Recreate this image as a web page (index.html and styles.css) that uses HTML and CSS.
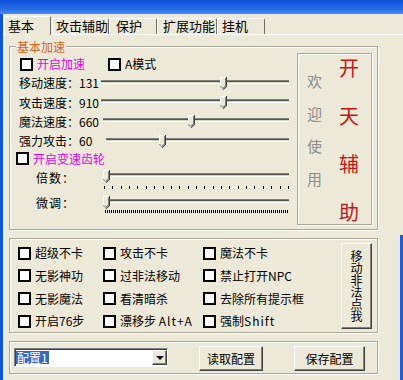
FILE: index.html
```html
<!DOCTYPE html>
<html>
  <head>
    <meta charset="UTF-8" />
    <title>开天辅助</title>
    <link rel="stylesheet" href="styles.css">
  </head>
  <body>
    <div class="titlebar"></div>
    <div class="window">
      <div class="tabs">
        <div class="tab active">基本</div>
        <div class="tab">攻击辅助</div>
        <div class="tab">保护</div>
        <div class="tab">扩展功能</div>
        <div class="tab">挂机</div>
      </div>
      <div class="panel">
        <fieldset class="group speed">
          <legend>基本加速</legend>
          <div class="speed-body">
            <div class="controls">
              <div class="row">
                <label class="check pink first"><span class="box"></span>开启加速</label>
                <label class="check"><span class="box"></span>A模式</label>
              </div>
              <div class="row">
                <span class="name">移动速度：131</span>
                <div class="slider">
                  <div class="track"></div>
                  <svg class="thumb" style="left:119px" width="7" height="13" viewBox="0 0 7 13"><path d="M0 0H7V9.5L3.5 13L0 9.5Z" fill="#404040"/><path d="M0 0H6V9L3 12L0 9Z" fill="#fff"/><path d="M1 1H6V9L3.5 11.5L1 9Z" fill="#808080"/><path d="M1 1H5V8.6L3 10.6L1 8.6Z" fill="#ece9d8"/></svg>
                </div>
              </div>
              <div class="row">
                <span class="name">攻击速度：910</span>
                <div class="slider">
                  <div class="track"></div>
                  <svg class="thumb" style="left:119px" width="7" height="13" viewBox="0 0 7 13"><path d="M0 0H7V9.5L3.5 13L0 9.5Z" fill="#404040"/><path d="M0 0H6V9L3 12L0 9Z" fill="#fff"/><path d="M1 1H6V9L3.5 11.5L1 9Z" fill="#808080"/><path d="M1 1H5V8.6L3 10.6L1 8.6Z" fill="#ece9d8"/></svg>
                </div>
              </div>
              <div class="row">
                <span class="name">魔法速度：660</span>
                <div class="slider m2">
                  <div class="track"></div>
                  <svg class="thumb" style="left:85px" width="7" height="13" viewBox="0 0 7 13"><path d="M0 0H7V9.5L3.5 13L0 9.5Z" fill="#404040"/><path d="M0 0H6V9L3 12L0 9Z" fill="#fff"/><path d="M1 1H6V9L3.5 11.5L1 9Z" fill="#808080"/><path d="M1 1H5V8.6L3 10.6L1 8.6Z" fill="#ece9d8"/></svg>
                </div>
              </div>
              <div class="row">
                <span class="name">强力攻击：60</span>
                <div class="slider m5">
                  <div class="track"></div>
                  <svg class="thumb" style="left:53px" width="7" height="13" viewBox="0 0 7 13"><path d="M0 0H7V9.5L3.5 13L0 9.5Z" fill="#404040"/><path d="M0 0H6V9L3 12L0 9Z" fill="#fff"/><path d="M1 1H6V9L3.5 11.5L1 9Z" fill="#808080"/><path d="M1 1H5V8.6L3 10.6L1 8.6Z" fill="#ece9d8"/></svg>
                </div>
              </div>
              <div class="row short">
                <label class="check pink gear-check"><span class="box"></span>开启变速齿轮</label>
              </div>
              <div class="row gear">
                <span class="name">倍数：</span>
                <div class="slider">
                  <div class="track"></div>
                  <svg class="thumb" style="left:0px" width="7" height="13" viewBox="0 0 7 13"><path d="M0 0H7V9.5L3.5 13L0 9.5Z" fill="#404040"/><path d="M0 0H6V9L3 12L0 9Z" fill="#fff"/><path d="M1 1H6V9L3.5 11.5L1 9Z" fill="#808080"/><path d="M1 1H5V8.6L3 10.6L1 8.6Z" fill="#ece9d8"/></svg>
                  <div class="ticks"></div>
                </div>
              </div>
              <div class="row gear fine">
                <span class="name">微调：</span>
                <div class="slider">
                  <div class="track"></div>
                  <svg class="thumb" style="left:0px" width="7" height="13" viewBox="0 0 7 13"><path d="M0 0H7V9.5L3.5 13L0 9.5Z" fill="#404040"/><path d="M0 0H6V9L3 12L0 9Z" fill="#fff"/><path d="M1 1H6V9L3.5 11.5L1 9Z" fill="#808080"/><path d="M1 1H5V8.6L3 10.6L1 8.6Z" fill="#ece9d8"/></svg>
                  <div class="ticks"></div>
                </div>
              </div>
            </div>
            <div class="welcome">
              <div class="hello">欢迎使用</div>
              <div class="brand">开天辅助</div>
            </div>
          </div>
        </fieldset>

        <fieldset class="group extras">
          <div class="opts">
            <label class="check"><span class="box"></span>超级不卡</label>
            <label class="check"><span class="box"></span>攻击不卡</label>
            <label class="check"><span class="box"></span>魔法不卡</label>
            <label class="check"><span class="box"></span>无影神功</label>
            <label class="check"><span class="box"></span>过非法移动</label>
            <label class="check"><span class="box"></span>禁止打开NPC</label>
            <label class="check"><span class="box"></span>无影魔法</label>
            <label class="check"><span class="box"></span>看清暗杀</label>
            <label class="check"><span class="box"></span>去除所有提示框</label>
            <label class="check"><span class="box"></span>开启76步</label>
            <label class="check"><span class="box"></span><span>漂移步 <span class="mono">Alt+A</span></span></label>
            <label class="check"><span class="box"></span><span>强制<span class="mono">Shift</span></span></label>
          </div>
          <button class="btn move-btn"><span>移动非法点我</span></button>
        </fieldset>
      </div>

      <fieldset class="group config">
        <div class="combo">
          <span class="sel">配置1</span>
          <span class="drop"><span class="arrow"></span></span>
        </div>
        <button class="btn read">读取配置</button>
        <button class="btn save">保存配置</button>
      </fieldset>
    </div>
  </body>
</html>
```

FILE: styles.css
```css
* {
  box-sizing: border-box;
}
body {
  margin: 0;
  width: 403px;
  height: 380px;
  overflow: hidden;
  font-family: "Noto Sans CJK SC", sans-serif;
  font-size: 12px;
  color: #000;
  background: linear-gradient(#1c5ce0, #1c5ce0) no-repeat right 0 top 235px / 3px 145px, #ece9d8;
}
.titlebar {
  height: 14px;
  background: linear-gradient(#0b4fd6, #2a70e8 70%, #4a8cf0);
}
.window {
  height: 366px;
  border-left: 3px solid #0f55dc;
}

/* tabs */
.tabs {
  display: flex;
  align-items: flex-end;
  height: 20px;
  padding-left: 1px;
}
.tab {
  height: 16px;
  border: 1px solid #fff;
  border-right-color: #716f64;
  border-bottom: 0;
  border-radius: 2px 2px 0 0;
  padding-left: 3px;
  font-size: 13px;
  line-height: 14px;
  white-space: nowrap;
}
.tab.active {
  position: relative;
  z-index: 1;
  height: 19px;
  margin-bottom: -1px;
  line-height: 17px;
  background: #ece9d8;
}
.tab:nth-child(1) { width: 47px; }
.tab:nth-child(2) { width: 57px; margin-left: 1px; }
.tab:nth-child(3) { width: 48px; padding-left: 6px; }
.tab:nth-child(4) { width: 60px; padding-left: 5px; }
.tab:nth-child(5) { width: 48px; padding-left: 4px; }
.panel {
  border-top: 1px solid #fff;
}

/* group boxes */
.group {
  margin: 8px 0 0 6px;
  width: 369px;
  min-width: 0;
  padding: 0;
  border: 1px solid #aca899;
  box-shadow: inset 1px 1px #fff, 1px 1px #fff;
}
.group legend {
  margin-left: 6px;
  padding: 0 1px;
  color: #d0661c;
  line-height: 13px;
  background: #ece9d8;
}
.speed {
  margin-top: 5px;
}
.speed-body {
  display: flex;
  height: 176px;
}
.controls {
  width: 287px;
  padding-top: 1.5px;
}
.row {
  display: flex;
  align-items: center;
  height: 19.3px;
}
.row.short {
  height: 16px;
}
.check {
  display: flex;
  align-items: center;
  white-space: nowrap;
  line-height: 14px;
}
.box {
  flex: none;
  width: 13px;
  height: 13px;
  margin-right: 4px;
  border: 2px solid #000;
  background: #fff;
}
.pink {
  color: #e800e8;
}
.check.first {
  width: 88px;
  margin-left: 10px;
}
.gear-check {
  margin-left: 6px;
}
.name {
  width: 82px;
  margin-left: 9px;
  white-space: nowrap;
  line-height: 14px;
}

/* sliders */
.slider {
  position: relative;
  flex: 1;
  align-self: stretch;
  margin-right: 8px;
}
.slider.m2 { margin-left: 2px; }
.slider.m5 { margin-left: 5px; }
.track {
  margin-top: 6px;
  height: 4px;
  border-top: 1px solid #808080;
  border-bottom: 1px solid #fff;
  background: linear-gradient(#55544e 50%, #d8d4c4 50%);
}
.thumb {
  position: absolute;
  top: 3px;
}
.gear {
  height: 24px;
  align-items: flex-start;
}
.gear .name {
  width: 67px;
  margin-left: 26px;
  margin-top: 4px;
  letter-spacing: 1px;
}
.ticks {
  margin: 9px 0 0 1px;
  height: 3px;
  background: repeating-linear-gradient(90deg, #000 0 1px, transparent 1px 8.36px);
}
.gear.fine .name {
  margin-top: 5px;
}
.gear.fine .track {
  margin-top: 8px;
}
.gear.fine .thumb {
  top: 5px;
}
.gear.fine .ticks {
  margin: 7px 0 0 2px;
  background: repeating-linear-gradient(90deg, #000 0 1px, transparent 1px 2px);
}

/* welcome frame */
.welcome {
  display: flex;
  width: 75px;
  height: 172px;
  border: 1px solid #aca899;
  box-shadow: inset 1px 1px #fff, 1px 1px #fff;
}
.hello {
  width: 15px;
  margin-left: 9px;
  padding-top: 11px;
  color: #8c8c8c;
  font-size: 15px;
  line-height: 32.5px;
}
.brand {
  width: 20px;
  margin: -10px 0 0 17px;
  color: #c81414;
  font-size: 20px;
  line-height: 48px;
}

/* extra options */
.extras {
  display: flex;
  align-items: flex-start;
  padding-top: 3px;
  height: 95px;
}
.opts {
  display: grid;
  grid-template-columns: 85px 100px 138px;
  grid-auto-rows: 22.67px;
  align-items: center;
  padding-left: 8px;
}
.mono {
  letter-spacing: 1px;
}
.btn {
  padding: 0;
  border: 1px solid;
  border-color: #fff #404040 #404040 #fff;
  box-shadow: inset -1px -1px #808080;
  background: #ece9d8;
  color: #000;
  font: inherit;
  line-height: 14px;
}
.move-btn {
  display: flex;
  justify-content: center;
  align-items: center;
  width: 31px;
  height: 86px;
  margin-top: 1px;
}
.move-btn span {
  width: 12px;
  line-height: 12px;
}

/* config */
.config {
  display: flex;
  align-items: flex-start;
  padding: 4px 0 2px 4px;
}
.combo {
  display: flex;
  align-items: center;
  width: 154px;
  height: 19px;
  margin-top: 2px;
  border: 1px solid;
  border-color: #808080 #fff #fff #808080;
  box-shadow: inset 1px 1px #404040;
  background: #fff;
}
.sel {
  margin-left: 1px;
  padding: 0 1px;
  background: #316ac5;
  color: #fff;
  line-height: 13px;
}
.drop {
  display: flex;
  justify-content: center;
  align-items: center;
  width: 15px;
  height: 15px;
  margin-left: auto;
  border: 1px solid;
  border-color: #fff #404040 #404040 #fff;
  box-shadow: inset -1px -1px #808080;
  background: #ece9d8;
}
.arrow {
  border: 4px solid transparent;
  border-top-color: #000;
  border-bottom: 0;
}
.read {
  width: 64px;
  height: 25px;
  margin-left: 31px;
}
.save {
  width: 71px;
  height: 25px;
  margin-left: 31px;
}
```
